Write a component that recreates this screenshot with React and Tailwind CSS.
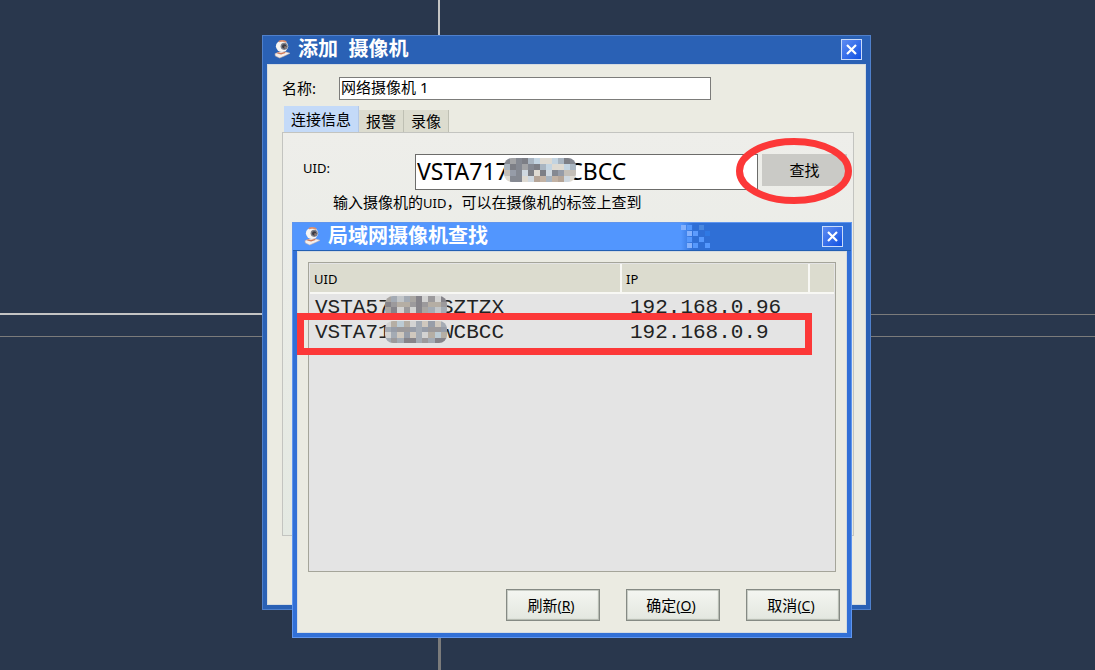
import React, { useState } from 'react';

const fieldTones = ['#a3a4a6', '#c4bfb8', '#858992', '#cfd8e0', '#b5a598', '#969ca8', '#dedad2', '#a9b5c1', '#7d7f86', '#c2b2a4', '#c3d4e1'];
const rowTones = ['#a9a6a2', '#979da8', '#c2c6c9', '#b5aea4', '#d3d3d2', '#86848a', '#bccbd4', '#9c9a9c', '#cfc8be', '#a4abb4'];

const Mosaic = ({ cols, rows, seed, tones, className }) => {
  const cells = [];
  for (let y = 0; y < rows; y++) {
    for (let x = 0; x < cols; x++) {
      const tone = tones[(x * 7 + y * 5 + x * x * 2 + x * y * 3 + seed) % tones.length];
      cells.push(<rect key={`${x}-${y}`} x={x} y={y} width="1" height="1" fill={tone} />);
    }
  }
  return (
    <svg viewBox={`0 0 ${cols} ${rows}`} preserveAspectRatio="none" shapeRendering="crispEdges" className={className} aria-hidden="true">
      {cells}
    </svg>
  );
};

const WebcamIcon = () => (
  <svg width="17" height="20" viewBox="0 0 18 20" className="shrink-0" aria-hidden="true">
    <path d="M1 15 L6 13 L12 13 L17 14.5 L12 17 L6 19.5 L1.5 17.5 Z" fill="#f4efec" stroke="#c9b0a6" strokeWidth="0.6" />
    <path d="M3.5 14 L7.5 15 L12 13.5" fill="none" stroke="#d0795a" strokeWidth="1.4" />
    <ellipse cx="8.5" cy="7.2" rx="6.5" ry="6" fill="#f7f5f3" />
    <path d="M5 2.2 Q9 0.4 13 2.6" fill="none" stroke="#dd8f6c" strokeWidth="1.6" />
    <circle cx="10.8" cy="7.2" r="3.8" fill="#7e808a" />
    <circle cx="10.8" cy="7.2" r="2.3" fill="#3a3a42" />
    <circle cx="11.8" cy="8" r="1" fill="#a9877c" />
  </svg>
);

const CloseButton = ({ onClick }) => (
  <button
    type="button"
    aria-label="关闭"
    onClick={onClick}
    className="flex h-[21px] w-[21px] shrink-0 items-center justify-center border border-[#c9dbfa] bg-linear-to-br from-[#5e8cf2] to-[#0b4fe2]"
  >
    <svg width="11" height="11" viewBox="0 0 11 11" aria-hidden="true">
      <path d="M1 1 L10 10 M10 1 L1 10" stroke="#ffffff" strokeWidth="2.2" />
    </svg>
  </button>
);

const pixels = [
  [0, 0, '#84b1fd'], [1, 0, '#5598fd'], [3, 0, '#4a88e0'],
  [1, 1, '#84b1fd'], [2, 1, '#5c9bfd'], [4, 1, '#2f79e4'],
  [1, 2, '#5598fd'], [3, 2, '#5598fd'],
  [1, 3, '#84b1fd'], [2, 3, '#5598fd'], [4, 3, '#5598fd'],
];

const PixelEdge = () => (
  <svg width="31" height="27" viewBox="0 0 31 27" shapeRendering="crispEdges" className="shrink-0 bg-linear-to-r from-[#5296fe] to-[#2f6fd6] to-40%" aria-hidden="true">
    {pixels.map(([x, y, fill]) => (
      <rect key={`${x}-${y}`} x={x * 6} y={y * 6 + 2} width="5" height="5" fill={fill} />
    ))}
  </svg>
);

const DialogButton = ({ label, hotkey, onClick }) => (
  <button
    type="button"
    onClick={onClick}
    className="h-8 w-[94px] border border-[#858a84] bg-linear-to-b from-[#f4f6f1] to-[#e3e7df] pr-1 text-[15px] leading-5 shadow-[inset_-1px_-1px_1px_#b3b8af,inset_1px_1px_0_#c9cdc6]"
  >
    {label}<span className="text-[14px]">(<u>{hotkey}</u>)</span>
  </button>
);

const tabs = ['连接信息', '报警', '录像'];

const AddCameraWindow = () => {
  const [active, setActive] = useState(0);
  const [name, setName] = useState('网络摄像机 1');
  const [uid, setUid] = useState('VSTA717####CBCC');

  return (
    <section className="absolute left-[262px] top-[35px] flex h-[575px] w-[609px] flex-col border border-[#4f80cb] bg-[#2a61b5] p-1 pt-0">
      <header className="flex h-7 shrink-0 items-center pb-[2px] pl-[7px] pr-1">
        <WebcamIcon />
        <h1 className="ml-[7px] grow text-[20px] leading-6 font-bold whitespace-pre text-white">添加  摄像机</h1>
        <CloseButton />
      </header>
      <div className="flex grow flex-col border border-[#d5dbe0] bg-[#ebebe2] pt-3 pr-[11px] pl-[14px]">
        <div className="flex items-center">
          <label htmlFor="camera-name" className="w-[57px] pb-[2px] text-[15px] leading-5">名称:</label>
          <input
            id="camera-name"
            value={name}
            onChange={(e) => setName(e.target.value)}
            className="h-[23px] w-[372px] border border-[#7c7c7a] bg-white px-px pb-1 text-[15px] leading-5 outline-none"
          />
        </div>
        <div role="tablist" className="mt-[7px] flex h-[25px] items-end pl-[2px]">
          {tabs.map((tab, index) => (
            <button
              key={tab}
              type="button"
              role="tab"
              aria-selected={index === active}
              onClick={() => setActive(index)}
              className={`border-r px-[7px] text-[15px] leading-5 whitespace-nowrap ${
                index === active ? 'h-[26px] border-[#b4c8e6] bg-[#c4daf8]' : 'h-[22px] border-[#bfc0b4] bg-[#dcdccf]'
              }`}
            >
              {tab}
            </button>
          ))}
        </div>
        <div className="h-[404px] border border-[#c3c4c0] bg-linear-to-b from-[#eeeeea] to-[#e4e9e2] pt-[21px] pr-[6px] pl-5">
          <div className="flex items-start">
            <label htmlFor="camera-uid" className="w-[112px] pt-1 text-[13px] leading-5">UID:</label>
            <div className="relative grow">
              <input
                id="camera-uid"
                value={uid}
                onChange={(e) => setUid(e.target.value)}
                className="h-9 w-full border border-[#6c6c6a] bg-white px-px pb-[2px] text-[23px] leading-8 outline-none"
              />
              <Mosaic cols={12} rows={4} seed={2} tones={fieldTones} className="absolute top-1 left-[89px] h-6 w-[72px] rounded-lg" />
            </div>
            <button type="button" className="ml-1 h-8 w-[85px] bg-[#cacac6] text-[15px] leading-5">查找</button>
          </div>
          <p className="mt-[2px] pl-[30px] text-[15px] leading-5">
            输入摄像机的<span className="text-[13px]">UID</span>，可以在摄像机的标签上查到
          </p>
        </div>
      </div>
    </section>
  );
};

const cameras = [
  { uid: 'VSTA57####SZTZX', ip: '192.168.0.96', seed: 0 },
  { uid: 'VSTA71####WCBCC', ip: '192.168.0.9', seed: 4 },
];

const SearchWindow = () => (
  <section className="absolute left-[292px] top-[222px] flex w-[560px] flex-col border border-[#5f95ee] bg-[#3270d6] p-1 pt-0">
    <header className="-mx-1 flex h-7 shrink-0 items-center border-b border-[#2360b2] bg-[#2f6fd6] pr-2">
      <div className="flex h-full w-[388px] items-center bg-[#5296fe] pb-[2px] pl-[11px]">
        <WebcamIcon />
        <h2 className="ml-[7px] text-[20px] leading-6 font-bold text-white">局域网摄像机查找</h2>
      </div>
      <PixelEdge />
      <div className="grow" />
      <CloseButton />
    </header>
    <div className="border border-[#d5dbe0] bg-[#ebebe2] px-[10px] pt-[10px] pb-[11px]">
      <div className="h-[310px] border border-[#a5a59a] bg-[#e4e4e4] p-px">
        <table className="w-full table-fixed border-collapse text-left">
          <thead>
            <tr className="h-[29px] border-b-2 border-[#f8f8f4] bg-[#dcdccf] text-[13px] leading-5">
              <th className="border-r-2 border-[#f8f8f4] pt-[2px] pl-1 font-normal">UID</th>
              <th className="w-[188px] border-r-2 border-[#f8f8f4] pt-[2px] pl-1 font-normal">IP</th>
              <th className="w-[25px]" />
            </tr>
          </thead>
          <tbody className="font-['Liberation_Mono',monospace] text-[21px] leading-[22px] text-[#222]">
            {cameras.map((camera) => (
              <tr key={camera.uid} className="h-[25px]">
                <td className="pt-[3px] pl-[5px]">
                  <span className="relative">
                    {camera.uid}
                    <Mosaic cols={10} rows={4} seed={camera.seed} tones={rowTones} className="absolute top-0 left-[70px] h-[22px] w-[62px] rounded-lg" />
                  </span>
                </td>
                <td className="pt-[3px] pl-[9px] whitespace-nowrap" colSpan={2}>{camera.ip}</td>
              </tr>
            ))}
          </tbody>
        </table>
      </div>
      <div className="-mr-1 mt-[17px] flex justify-end gap-[26px]">
        <DialogButton label="刷新" hotkey="R" />
        <DialogButton label="确定" hotkey="O" />
        <DialogButton label="取消" hotkey="C" />
      </div>
    </div>
  </section>
);

const Desktop = () => (
  <div className="absolute inset-0" aria-hidden="true">
    <div className="absolute top-0 left-[438px] h-1/2 w-[2px] bg-[#c4c4c4]" />
    <div className="absolute bottom-0 left-[438px] h-1/2 w-[3px] bg-[#7b7b7b]" />
    <div className="absolute top-[313px] left-0 h-[2px] w-[40%] bg-[#c4c4c4]" />
    <div className="absolute top-[314px] right-0 h-px w-[60%] bg-[#7b7b7b]" />
    <div className="absolute top-[336px] left-0 h-px w-full bg-[#7b7b7b]" />
  </div>
);

const App = () => (
  <main className="relative h-screen min-h-[640px] overflow-hidden bg-[#29374d] font-['Noto_Sans','Noto_Sans_CJK_SC',sans-serif] text-black">
    <Desktop />
    <AddCameraWindow />
    <SearchWindow />
    <svg width="116" height="66" viewBox="0 0 116 66" className="pointer-events-none absolute top-[138px] left-[736px]" aria-hidden="true">
      <ellipse cx="58" cy="33" rx="54.5" ry="29.5" fill="none" stroke="#fc3838" strokeWidth="7" />
    </svg>
    <div className="pointer-events-none absolute top-[313px] left-[297px] h-[42px] w-[515px] border-[7px] border-[#fc3838]" />
  </main>
);

export default App;
